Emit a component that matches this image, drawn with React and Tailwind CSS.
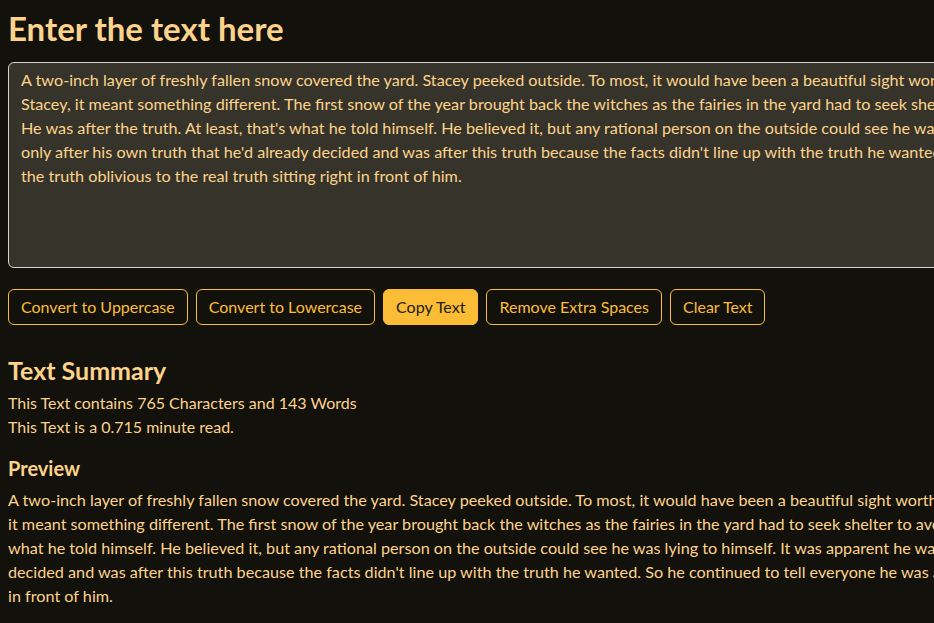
import React, { useState } from 'react';

const TEXT_LINES = [
  "A two-inch layer of freshly fallen snow covered the yard. Stacey peeked outside. To most, it would have been a beautiful sight worthy of a painting. For",
  "Stacey, it meant something different. The first snow of the year brought back the witches as the fairies in the yard had to seek shelter to avoid them.",
  "He was after the truth. At least, that's what he told himself. He believed it, but any rational person on the outside could see he was lying to himself. It was apparent he was",
  "only after his own truth that he'd already decided and was after this truth because the facts didn't line up with the truth he wanted. So he continued to tell everyone he was after",
  "the truth oblivious to the real truth sitting right in front of him.",
];

const PREVIEW_LINES = [
  "A two-inch layer of freshly fallen snow covered the yard. Stacey peeked outside. To most, it would have been a beautiful sight worthy of a painting. For Stacey,",
  "it meant something different. The first snow of the year brought back the witches as the fairies in the yard had to seek shelter to avoid them. He was after the truth. At least, that's",
  "what he told himself. He believed it, but any rational person on the outside could see he was lying to himself. It was apparent he was only after his own truth that he'd already",
  "decided and was after this truth because the facts didn't line up with the truth he wanted. So he continued to tell everyone he was after the truth oblivious to the real truth sitting right",
  "in front of him.",
];

export default function App() {
  const [text] = useState(TEXT_LINES.join('\n'));

  return (
    <div className="min-h-screen w-full overflow-hidden bg-[#13110c] text-[#fdd38c] font-['Segoe_UI','Lato','Liberation_Sans',sans-serif]">
      <div className="w-[1100px] px-2">
        <h1 className="pt-[9px] text-[33px] leading-[38px] font-bold text-[#fdd38c]">Enter the text here</h1>

        {/* Input area */}
        <textarea
          value={text}
          readOnly
          wrap="off"
          rows={8}
          className="mt-[15px] block w-full h-[206px] resize-none overflow-hidden rounded-md border border-[#d6d4cf] bg-[#36332a] px-3 py-[5px] text-[16.2px] leading-6 text-[#fdd38c] outline-none"
        />

        {/* Actions */}
        <div className="mt-[21px] flex gap-2">
          <OutlineButton>Convert to Uppercase</OutlineButton>
          <OutlineButton>Convert to Lowercase</OutlineButton>
          <button className="h-9 rounded-md border border-[#fbbd35] bg-[#fbbd35] px-3 text-base text-[#221c0e]">Copy Text</button>
          <OutlineButton>Remove Extra Spaces</OutlineButton>
          <OutlineButton>Clear Text</OutlineButton>
        </div>

        {/* Summary */}
        <h2 className="mt-[29px] text-[25px] leading-8 font-bold">Text Summary</h2>
        <p className="mt-[5px] text-base leading-6">This Text contains 765 Characters and 143 Words</p>
        <p className="text-base leading-6">This Text is a 0.715 minute read.</p>

        <h3 className="mt-[17px] text-xl leading-6 font-bold">Preview</h3>
        <div className="mt-[8px] text-[16.2px] leading-6 whitespace-nowrap">
          {PREVIEW_LINES.map((line, i) => (
            <p key={i}>{line}</p>
          ))}
        </div>
      </div>
    </div>
  );
}

function OutlineButton({ children }) {
  return (
    <button className="h-9 rounded-md border border-[#fbbd35] bg-transparent px-3 text-base text-[#fbbd35]">
      {children}
    </button>
  );
}
